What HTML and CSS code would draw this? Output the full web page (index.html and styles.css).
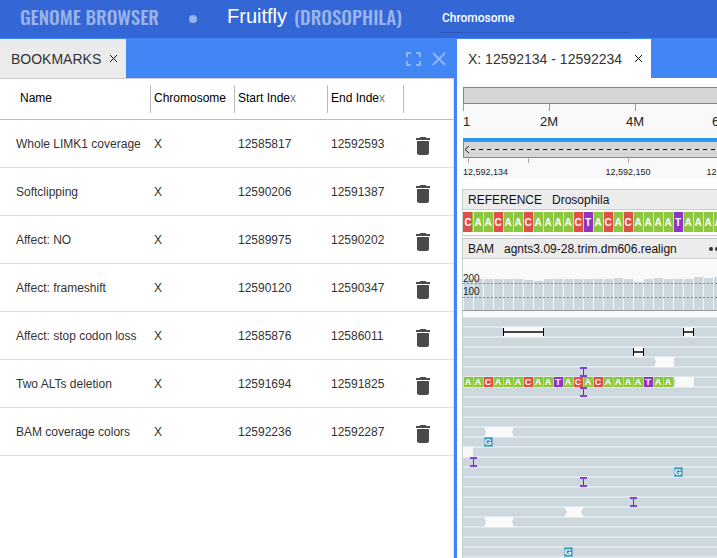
FILE: index.html
```html
<!DOCTYPE html>
<html lang="en">
<head>
<meta charset="utf-8">
<title>Genome Browser</title>
<link rel="stylesheet" href="styles.css">
</head>
<body>
<header class="topbar">
  <span class="brand">GENOME BROWSER</span>
  <span class="dot"></span>
  <span class="species">Fruitfly</span>
  <span class="latin">(DROSOPHILA)</span>
  <input class="chromosome" type="text" placeholder="Chromosome" aria-label="Chromosome">
</header>
<main class="workspace">
  <section class="panel bookmarks">
    <div class="tabs">
      <div class="tab tab-grey"><span>BOOKMARKS</span>
        <button class="close" aria-label="Close bookmarks"><svg width="7" height="7"><path d="M0 0L7 7M7 0L0 7"/></svg></button>
      </div>
      <div class="tools">
        <button aria-label="Full screen"><svg width="16" height="16"><path d="M2 6V2H6M11 2H15V6M15 10V14H11M6 14H2V10"/></svg></button>
        <button aria-label="Close panel"><svg width="16" height="16"><path d="M2 2L14 14M14 2L2 14"/></svg></button>
      </div>
    </div>
    <div class="sheet">
      <table class="grid">
        <colgroup><col><col class="c-chrom"><col class="c-start"><col class="c-end"><col class="c-act"></colgroup>
        <thead><tr><th><span>Name</span></th><th><span>Chromosome</span></th><th><span>Start Inde<i>x</i></span></th><th><span>End Inde<i>x</i></span></th><th><span></span></th></tr></thead>
        <tbody>
          <tr><td>Whole LIMK1 coverage</td><td>X</td><td>12585817</td><td>12592593</td><td><button class="trash" aria-label="Delete"><svg width="24" height="24" viewBox="0 0 24 24"><path d="M6 19c0 1.100.9 2 2 2h8c1.100 0 2-.9 2-2V7H6v12zM19 4h-3.500l-1-1h-5l-1 1H5v2h14V4z"/></svg></button></td></tr>
          <tr><td>Softclipping</td><td>X</td><td>12590206</td><td>12591387</td><td><button class="trash" aria-label="Delete"><svg width="24" height="24" viewBox="0 0 24 24"><path d="M6 19c0 1.100.9 2 2 2h8c1.100 0 2-.9 2-2V7H6v12zM19 4h-3.500l-1-1h-5l-1 1H5v2h14V4z"/></svg></button></td></tr>
          <tr><td>Affect: NO</td><td>X</td><td>12589975</td><td>12590202</td><td><button class="trash" aria-label="Delete"><svg width="24" height="24" viewBox="0 0 24 24"><path d="M6 19c0 1.100.9 2 2 2h8c1.100 0 2-.9 2-2V7H6v12zM19 4h-3.500l-1-1h-5l-1 1H5v2h14V4z"/></svg></button></td></tr>
          <tr><td>Affect: frameshift</td><td>X</td><td>12590120</td><td>12590347</td><td><button class="trash" aria-label="Delete"><svg width="24" height="24" viewBox="0 0 24 24"><path d="M6 19c0 1.100.9 2 2 2h8c1.100 0 2-.9 2-2V7H6v12zM19 4h-3.500l-1-1h-5l-1 1H5v2h14V4z"/></svg></button></td></tr>
          <tr><td>Affect: stop codon loss</td><td>X</td><td>12585876</td><td>12586011</td><td><button class="trash" aria-label="Delete"><svg width="24" height="24" viewBox="0 0 24 24"><path d="M6 19c0 1.100.9 2 2 2h8c1.100 0 2-.9 2-2V7H6v12zM19 4h-3.500l-1-1h-5l-1 1H5v2h14V4z"/></svg></button></td></tr>
          <tr><td>Two ALTs deletion</td><td>X</td><td>12591694</td><td>12591825</td><td><button class="trash" aria-label="Delete"><svg width="24" height="24" viewBox="0 0 24 24"><path d="M6 19c0 1.100.9 2 2 2h8c1.100 0 2-.9 2-2V7H6v12zM19 4h-3.500l-1-1h-5l-1 1H5v2h14V4z"/></svg></button></td></tr>
          <tr><td>BAM coverage colors</td><td>X</td><td>12592236</td><td>12592287</td><td><button class="trash" aria-label="Delete"><svg width="24" height="24" viewBox="0 0 24 24"><path d="M6 19c0 1.100.9 2 2 2h8c1.100 0 2-.9 2-2V7H6v12zM19 4h-3.500l-1-1h-5l-1 1H5v2h14V4z"/></svg></button></td></tr>
        </tbody>
      </table>
    </div>
  </section>
  <section class="panel browser">
    <div class="tabs">
      <div class="tab tab-range"><span>X: 12592134 - 12592234</span>
        <button class="close" aria-label="Close tab"><svg width="7" height="7"><path d="M0 0L7 7M7 0L0 7"/></svg></button>
      </div>
    </div>
    <div class="tracks">
      <svg class="ruler" width="100%" height="95">
        <rect width="100%" height="95" fill="#f9f9f9"/>
        <g shape-rendering="crispEdges">
          <rect x=".5" y="3.500" width="2000" height="16" fill="#d6d6d6" stroke="#888"/>
          <path d="M.5 20v7M86.500 20v7M172.500 20v7M258.500 20v7" stroke="#999"/>
          <rect y="54" width="100%" height="3" fill="#2b98f0"/>
          <rect x=".5" y="57.500" width="2000" height="16" fill="#d6d6d6" stroke="#888"/>
          <path d="M5.500 74v5M65.500 74v5M165.500 74v5" stroke="#aaa"/>
          <path d="M8 65.500H2000" stroke="#111" stroke-dasharray="4 4"/>
        </g>
        <path d="M6 62L2 65.500L6 69" fill="none" stroke="#222"/>
        <g class="big"><text x="0" y="42">1</text><text x="86" y="42" text-anchor="middle">2M</text><text x="172" y="42" text-anchor="middle">4M</text><text x="258" y="42" text-anchor="middle">6M</text></g>
        <g class="small"><text x="0" y="91">12,592,134</text><text x="165" y="91" text-anchor="middle">12,592,150</text><text x="266" y="91" text-anchor="middle">12,592,160</text></g>
      </svg>
      <article class="track">
        <h2>REFERENCE <span>Drosophila</span></h2>
        <svg class="seq" width="100%" height="25">
          <defs>
            <pattern id="base" width="10" height="20" patternUnits="userSpaceOnUse"><rect width="10" height="20" fill="#cfe6ad"/><rect x="1" width="9" height="20" fill="#8dc63f"/></pattern>
          </defs>
          <g shape-rendering="crispEdges">
            <rect y="2" width="100%" height="20" fill="url(#base)"/>
            <path fill="#e04f48" d="M0 2h9v20h-9zM31 2h9v20h-9zM61 2h9v20h-9zM111 2h9v20h-9zM141 2h9v20h-9zM161 2h9v20h-9z"/>
            <path fill="#8f36c4" d="M121 2h9v20h-9zM211 2h9v20h-9z"/>
          </g>
          <text class="nt nt-ref" y="16" x="5 15 25 35 45 55 65 75 85 95 105 115 125 135 145 155 165 175 185 195 205 215 225 235 245 255">CAACAACAAAACTACACAAAATAAAA</text>
        </svg>
      </article>
      <article class="track bam">
        <h2>BAM <span>agnts3.09-28.trim.dm606.realign</span><button class="more" aria-label="More"><svg width="20" height="4"><path d="M0 2a2 2 0 1 0 4 0a2 2 0 1 0-4 0M6 2a2 2 0 1 0 4 0a2 2 0 1 0-4 0M12 2a2 2 0 1 0 4 0a2 2 0 1 0-4 0"/></svg></button></h2>
        <svg class="reads" width="100%" height="297">
          <defs>
            <pattern id="gap" width="10" height="60" patternUnits="userSpaceOnUse"><rect width="1" height="60" fill="#f4f7f8"/></pattern>
            <pattern id="row" y="56" width="20" height="10" patternUnits="userSpaceOnUse"><rect width="20" height="10" fill="#cdd8de"/><rect y="9" width="20" height="1" fill="#e0e8ec"/><rect width="20" height="1" fill="#e0e8ec"/></pattern>
            <g id="ins" fill="#8040dc"><path d="M-3 0h7v2h-7zM-3 8h7v2h-7z"/><path d="M0 2h1v6h-1z" fill="#6528c8"/></g>
            <g id="snp"><rect width="9" height="10" fill="#76b8d2"/><rect x="1" y="1" width="7" height="8" fill="#3596c4"/></g>
          </defs>
          <rect width="100%" height="297" fill="#f9f9f9"/>
          <g shape-rendering="crispEdges">
            <path fill="#cdd8de" d="M0 50V18H60V19H70V20H80V18H150V17H160V18H170V21H180V18H190V17H200V18H230V16H240V17H250V16H2000V50z"/>
            <rect y="16" width="100%" height="33" fill="url(#gap)"/>
            <path d="M0 22.500H2000M0 36.500H2000" stroke="#7d858a" stroke-dasharray="2 2"/>
            <rect y="49" width="100%" height="1" fill="#999"/>
            <rect y="56" width="100%" height="241" fill="url(#row)"/>
            <path fill="#f9f9f9" d="M40 66h41v10h-41zM221 66h10v10h-10zM171 86h10v10h-10zM0 186h10v10h-10z"/>
            <path d="M40 71H81M221 71H231M171 91H181" stroke-width="2" stroke="#444"/>
            <path d="M40.500 67v8M80.500 67v8M220.500 67v8M230.500 67v8M170.500 87v8M180.500 87v8" stroke="#000"/>
            <rect x="1" y="116" width="210" height="10" fill="#b5d98a"/>
            <path fill="#8dc63f" d="M1 116h9v10h-9zM11 116h9v10h-9zM31 116h9v10h-9zM41 116h9v10h-9zM51 116h9v10h-9zM71 116h9v10h-9zM81 116h9v10h-9zM101 116h9v10h-9zM121 116h9v10h-9zM141 116h9v10h-9zM151 116h9v10h-9zM161 116h9v10h-9zM171 116h9v10h-9zM191 116h9v10h-9zM201 116h9v10h-9z"/>
            <path fill="#e04f48" d="M21 116h9v10h-9zM61 116h9v10h-9zM111 116h9v10h-9zM131 116h9v10h-9z"/>
            <path fill="#8f36c4" d="M91 116h9v10h-9zM181 116h9v10h-9z"/>
          </g>
          <path fill="#f9f9f9" d="M191 96h20v10h-20l2-5zM211 116h20v10h-20l2-5zM21 166h30l-2 5l2 5h-30l2-5zM101 246h20l-3 5l3 5h-20l3-5zM21 256h30l-2 5l2 5h-30l2-5z"/>
          <text class="nt" y="124" x="5 15 25 35 45 55 65 75 85 95 105 115 125 135 145 155 165 175 185 195 205">AACAAACAATACACAAAATAA</text>
          <use href="#ins" x="120" y="106"/><use href="#ins" x="120" y="126"/><use href="#ins" x="10" y="196"/><use href="#ins" x="120" y="216"/><use href="#ins" x="170" y="236"/>
          <use href="#snp" x="21" y="176"/><use href="#snp" x="211" y="206"/><use href="#snp" x="101" y="286"/>
          <g class="nt"><text x="25" y="184">G</text><text x="215" y="214">G</text><text x="105" y="294">G</text></g>
          <g class="scale"><text x="0" y="21">200</text><text x="0" y="34">100</text></g>
        </svg>
      </article>
    </div>
  </section>
</main>
</body>
</html>
```
FILE: styles.css
```css
* { box-sizing: border-box; }
body {
  margin: 0;
  height: 100vh;
  display: flex;
  flex-direction: column;
  overflow: hidden;
  background: #4285f4;
  font: 12px/16px "Liberation Sans", Arial, sans-serif;
  color: #333;
}
button { border: 0; padding: 0; background: none; display: block; }
svg { display: block; }

.topbar {
  height: 38px;
  flex: none;
  display: flex;
  align-items: center;
  padding: 0 20px 6px;
  background: #3367d6;
  color: #fff;
}
.brand, .latin {
  font: 500 19px/32px "Oswald", "Liberation Sans Narrow", "Roboto Condensed", sans-serif;
  color: #9ab3ea;
  white-space: nowrap;
}
.dot { width: 8px; height: 8px; margin: 6px 30px 0; border-radius: 50%; background: #9ab3ea; flex: none; }
.species { font-size: 20px; line-height: 32px; margin-right: 7px; }
.chromosome {
  width: 189px;
  height: 32px;
  margin: 2px 0 0 38px;
  padding: 2px 2px 0;
  border: 0;
  border-bottom: 1px solid #2c58bd;
  background: none;
  font: 500 12px/16px Roboto, sans-serif;
  color: #fff;
}
.chromosome::placeholder { color: #fff; opacity: 1; }

.workspace { flex: 1; min-height: 0; display: flex; }
.panel { min-width: 0; display: flex; flex-direction: column; }
.bookmarks { flex: 454; margin-right: 3px; }
.browser { flex: 260; }
.tabs { height: 40px; flex: none; padding-top: 1px; display: flex; justify-content: space-between; }
.tab {
  display: flex;
  align-items: center;
  gap: 9px;
  padding: 0 9px 0 11px;
  background: #fff;
  font-size: 14px;
  white-space: nowrap;
}
.tab-grey { background: #ebebeb; }
.tab-range { gap: 13px; }
.close path { stroke: #111; fill: none; }
.tools { display: flex; align-items: center; gap: 10px; padding-right: 7px; }
.tools path { stroke: #8eb6f8; stroke-width: 2; fill: none; }

.sheet { flex: 1; background: #fff; border-top: 1px solid #ccc; border-right: 1px solid #e2e2e2; }
.grid { width: 100%; table-layout: fixed; border-collapse: separate; border-spacing: 0; }
.c-chrom { width: 84px; }
.c-start { width: 93px; }
.c-end { width: 76px; }
.c-act { width: 50px; }
.grid th { height: 41px; padding: 0; border-bottom: 1px solid #bbb; font-weight: normal; text-align: left; color: #000; white-space: nowrap; }
.grid th span { display: block; height: 28px; line-height: 26px; padding-left: 3px; border-left: 1px solid #bbb; }
.grid th:first-child span { border: 0; padding-left: 20px; }
.grid i { font-style: normal; color: #777; }
.grid td { height: 48px; padding: 0 0 0 4px; border-bottom: 1px solid #ddd; white-space: nowrap; }
.grid td:first-child { padding-left: 16px; }
.grid td:last-child { padding: 4px 0 0 8px; }
.trash path { fill: #4a4a4a; }

.tracks { flex: 1; min-height: 0; overflow: hidden; padding: 6px 0 0 5px; background: #fff; }
.ruler { margin-left: 1px; margin-bottom: 10px; width: 100%; }
.ruler text, .scale { fill: #222; }
.big { font-size: 13px; }
.small { font-size: 9px; }
.track { border: solid #ccc; border-width: 1px 0 1px 1px; margin-bottom: 2px; }
.track h2 {
  display: flex;
  gap: 10px;
  margin: 0;
  height: 20px;
  padding-left: 5px;
  background: #ececec;
  border-bottom: 1px solid #ccc;
  font-size: 12px;
  font-weight: normal;
  line-height: 20px;
  color: #111;
  white-space: nowrap;
}
.more { align-self: center; margin-left: 22px; }
.more path { fill: #333; }
.reads { margin-top: 2px; }
.nt { font: bold 9px "Liberation Sans", Arial, sans-serif; fill: #fff; text-anchor: middle; }
.nt-ref { font-size: 10px; }
.scale { font-size: 10px; }
```
